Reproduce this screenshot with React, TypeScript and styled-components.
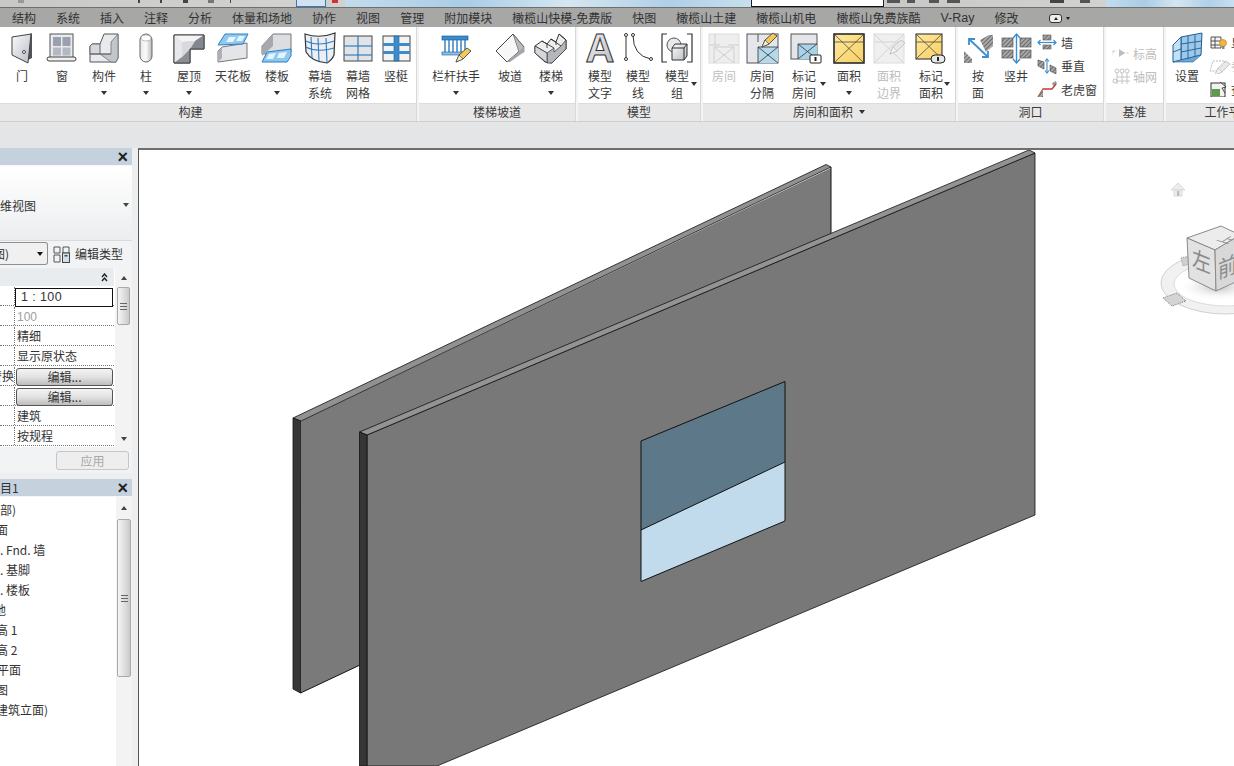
import React from "react";
import styled, { createGlobalStyle } from "styled-components";

const Global = createGlobalStyle`
  html, body { margin: 0; padding: 0; height: 100%; overflow: hidden; background: #fff; }
  #root { width: 1234px; height: 766px; overflow: hidden; }
  * { box-sizing: border-box; }
  body { font-family: "Noto Sans CJK SC", "Liberation Sans", sans-serif; font-size: 12px; color: #2e2e2e; }
`;

const Page = styled.div`width: 1234px; height: 766px; display: flex; flex-direction: column; overflow: hidden;`;

/* ---------- title strip ---------- */
const TitleStrip = styled.div`
  height: 8px; flex: none; display: flex; border-bottom: 1px solid #6f6f6f;
  background: #cfcfcd;
`;
const TitleSeg = styled.div<{ $w: number; $kind: "grey" | "blue" | "white" }>`
  width: ${(p) => p.$w}px; flex: none; position: relative;
  background: ${(p) =>
    p.$kind === "blue"
      ? "linear-gradient(90deg,#c3dcec,#a9cde6 30%,#d5e6f0 55%,#afd0e7 80%,#c7dfee)"
      : p.$kind === "white"
      ? "#fff"
      : "linear-gradient(90deg,#c8c8c6,#d2d2d0)"};
  ${(p) => (p.$kind === "white" ? "border-bottom:1px solid #111;border-left:1px solid #222;border-right:1px solid #222;" : "")}
`;
const ActiveQuick = styled.div`
  position: absolute; left: 0; top: 0; width: 30px; height: 7px; background: #cfe3f4;
  border: 1px solid #3d79b0; border-top: 0;
`;
const QuickMark = styled.div<{ $x: number; $c?: string; $w?: number }>`
  position: absolute; left: ${(p) => p.$x}px; top: 0; width: ${(p) => p.$w ?? 3}px; height: 3px;
  background: ${(p) => p.$c ?? "#444"};
`;

/* ---------- tabs ---------- */
const TabBar = styled.div`
  height: 19px; flex: none; display: flex; align-items: center; gap: 20px; padding: 1px 0 0 12px;
  background: #a7a7a6; white-space: nowrap;
`;
const Tab = styled.span`font-size: 12px; line-height: 18px; color: #333;`;
const Latin = styled.span`font-family: "Liberation Sans", sans-serif; font-size: 12.5px; color: #333;`;
const Minimize = styled.span`
  display: inline-flex; align-items: center; gap: 4px; margin-left: 11px;
`;
const MinimizeBox = styled.span`
  width: 13px; height: 9px; border: 1px solid #333; border-radius: 3px; background: #eee;
  display: flex; align-items: center; justify-content: center;
  &::before { content: ""; border: 2px solid transparent; border-bottom: 3px solid #222; border-top: 0; }
`;
const MiniCaret = styled.span`border: 2.5px solid transparent; border-top: 3px solid #222; border-bottom: 0;`;

/* ---------- ribbon ---------- */
const Ribbon = styled.div`
  height: 95px; flex: none; display: flex; gap: 2px; background: #f4f4f4; overflow: hidden;
  border-bottom: 1px solid #cfcfcf;
`;
const Panel = styled.section<{ $w: number }>`
  width: ${(p) => p.$w}px; flex: none; display: flex; flex-direction: column; background: #fff;
  border-right: 1px solid #d8d8d8;
`;
const PanelBody = styled.div<{ $pl?: number }>`
  height: 76px; flex: none; display: flex; padding: 5px 0 0 ${(p) => p.$pl ?? 0}px; overflow: hidden;
`;
const PanelTitle = styled.div<{ $pr?: number }>`
  height: 18px; flex: none; display: flex; align-items: center; justify-content: center; gap: 6px;
  padding: 0 ${(p) => p.$pr ?? 0}px 2px 0;
  background: #e8e8e8; color: #3a3a3a; font-size: 12px; line-height: 16px; border-top: 1px solid #dcdcdc;
`;
const TitleCaret = styled.span`border: 3.5px solid transparent; border-top: 4px solid #333; border-bottom: 0;`;
const ToolBox = styled.div<{ $w: number }>`
  width: ${(p) => p.$w}px; flex: none; position: relative; display: flex; flex-direction: column; align-items: center;
`;
const IconBox = styled.div`height: 32px; width: 36px; flex: none;`;
const Label = styled.div<{ $off?: boolean }>`
  margin-top: 3px; text-align: center; font-size: 12px; line-height: 17px; white-space: pre-line;
  color: ${(p) => (p.$off ? "#bdbdbd" : "#3a3a3a")};
`;
const Caret = styled.div`
  width: 0; height: 0; margin: 7px auto 0; border: 3px solid transparent; border-top: 4px solid #333; border-bottom: 0;
`;
const SideCaret = styled.span`
  position: absolute; right: 3px; top: 50px; width: 0; height: 0;
  border: 3px solid transparent; border-top: 4px solid #333; border-bottom: 0;
`;
const Stack = styled.div<{ $w: number; $gap?: number; $top?: number; $pl?: number }>`
  width: ${(p) => p.$w}px; flex: none; display: flex; flex-direction: column; gap: ${(p) => p.$gap ?? 7.5}px;
  padding-top: ${(p) => p.$top ?? 2}px; padding-left: ${(p) => p.$pl ?? 2}px; overflow: hidden;
`;
const StackRow = styled.div<{ $off?: boolean; $gx?: number }>`
  display: flex; align-items: center; gap: ${(p) => p.$gx ?? 3}px; height: 16px; white-space: nowrap; font-size: 12px;
  color: ${(p) => (p.$off ? "#bdbdbd" : "#3a3a3a")};
`;

const GapBar = styled.div`height: 26px; flex: none; background: #e3e5e6;`;

/* ---------- main ---------- */
const Main = styled.div`flex: 1; min-height: 0; display: flex;`;
const Dock = styled.aside`
  width: 138px; flex: none; background: #eceeef; display: flex; flex-direction: column; gap: 6px; padding-right: 6px;
`;
const PalHead = styled.div`
  height: 18px; flex: none; background: #c5d2de; display: flex; align-items: center; justify-content: space-between;
  font-size: 12px; color: #333; border-bottom: 1px solid #f4f6f7;
`;
const Close = styled.span`font: bold 18px/16px "Liberation Sans", sans-serif; color: #222; margin-right: 4px;`;
const Props = styled.div`display: flex; flex-direction: column; flex: none; background: #f1f3f4;`;
const TypeSelect = styled.div`
  height: 75px; flex: none; background: linear-gradient(180deg,#fff,#f4f5f6 60%,#ecedee); display: flex; align-items: center;
  justify-content: space-between; padding: 4px 3px 0 0; font-size: 12px; color: #333; border-bottom: 1px solid #d9dadb;
`;
const SmallCaret = styled.span`width: 0; height: 0; border: 3.5px solid transparent; border-top: 4px solid #444; border-bottom: 0;`;
const FilterRow = styled.div`height: 27px; flex: none; display: flex; align-items: center; gap: 5px; padding-bottom: 2px;`;
const Combo = styled.div`
  width: 48px; height: 23px; flex: none; display: flex; align-items: center; justify-content: space-between; overflow: hidden;
  background: #f0f0f0; border: 1px solid #8f8f8f; border-left: 0; border-radius: 0 3px 3px 0; padding-right: 4px; font-size: 12px;
`;
const ComboText = styled.span`margin-left: -7px;`;
const BlackCaret = styled(SmallCaret)`border-top-color: #111;`;
const EditType = styled.div`display: flex; align-items: center; gap: 5px; white-space: nowrap; color: #333;`;
const GridWrap = styled.div`display: flex; height: 179px; flex: none; background: #fff;`;
const Grid = styled.div`width: 114px; flex: none; display: flex; flex-direction: column;`;
const GroupHead = styled.div`
  height: 18px; flex: none; background: #e8ecef; display: flex; align-items: center; justify-content: flex-end; padding-right: 6px;
`;
const Row = styled.div`height: 20px; flex: none; display: flex; border-bottom: 1px dotted #777; background: #fff; padding-top: 1px;`;
const KeyCell = styled.div`
  width: 15px; flex: none; overflow: hidden; display: flex; justify-content: flex-end; white-space: nowrap;
  border-right: 1px dotted #777; line-height: 18px; font-size: 12px; color: #333;
`;
const ValCell = styled.div<{ $muted?: boolean }>`
  flex: 1; min-width: 0; padding-left: 2px; line-height: 18px; font-size: 12px; color: ${(p) => (p.$muted ? "#a0a0a0" : "#333")};
`;
const NumVal = styled(ValCell)`font-family: "Liberation Sans", sans-serif; padding-top: 1px;`;
const ActiveCell = styled.div`
  flex: 1; min-width: 0; border: 1px solid #111; background: #fff; height: 19px; margin: 1px 1px -1px 0; padding-left: 5px;
  position: relative; z-index: 1;
  font: 12.5px/17px "Liberation Sans", sans-serif; letter-spacing: .4px; color: #333;
`;
const EditBtn = styled.div`
  flex: 1; margin: 1px 1px -1px 1px; height: 18px; border: 1px solid #555; border-radius: 3px; font-size: 12px; line-height: 16px; text-align: center; color: #333;
  position: relative; z-index: 1;
  background: linear-gradient(180deg,#f4f4f4,#e2e2e2 50%,#bdbdbd);
`;
const ScrollTrack = styled.div<{ $w: number }>`
  width: ${(p) => p.$w}px; flex: none; background: #f3f3f3; display: flex; flex-direction: column; align-items: center; margin-left: 1px; position: relative;
`;
const ScrollArrow = styled.span<{ $up?: boolean; $gap?: number }>`
  width: 0; height: 0; flex: none; margin: ${(p) => p.$gap ?? 6}px 0; border: 3.5px solid transparent;
  ${(p) => (p.$up ? "border-bottom: 4px solid #444; border-top: 0;" : "border-top: 4px solid #444; border-bottom: 0;")}
`;
const Thumb = styled.div<{ $h: number; $w: number }>`
  height: ${(p) => p.$h}px; width: ${(p) => p.$w}px; flex: none; border: 1px solid #a9a9a9; border-radius: 2px;
  background: linear-gradient(90deg,#f5f5f5,#dcdcdc 60%,#c9c9c9); display: flex; align-items: center; justify-content: center;
`;
const Grip = styled.span`width: 7px; height: 7px; border-top: 1px solid #666; border-bottom: 1px solid #666; position: relative;
  &::before { content: ""; position: absolute; left: 0; right: 0; top: 2px; border-top: 1px solid #666; }`;
const TrackFill = styled.div`flex: 1;`;
const ApplyRow = styled.div`height: 26px; flex: none; display: flex; justify-content: flex-end; align-items: center; padding-right: 3px; background: #f2f3f4;`;
const ApplyBtn = styled.div`
  width: 73px; height: 19px; border: 1px solid #c6c6c6; border-radius: 3px; background: #eeeeee; color: #a8a8a8; text-align: center; font-size: 12px; line-height: 17px;
`;
const Browser = styled.div`flex: 1; min-height: 0; display: flex; flex-direction: column;`;
const BrowserBody = styled.div`flex: 1; min-height: 0; display: flex; background: #fff;`;
const Tree = styled.div`flex: 1; min-width: 0; padding-top: 3px; overflow: hidden;`;
const TreeRow = styled.div<{ $cut?: number }>`
  height: 20px; line-height: 20px; font-size: 12px; white-space: nowrap; color: #333; margin-left: ${(p) => -(p.$cut ?? 0)}px;
`;

const Canvas = styled.main`
  flex: 1; min-width: 0; background: #fff; border-top: 2px solid #6e6e6e; border-left: 1px solid #555; overflow: hidden; line-height: 0;
`;

/* ---------- icons ---------- */
const Defs = () => (
  <svg width="0" height="0" style={{ display: "block" }}>
    <defs>
      <linearGradient id="gs" x1="0" y1="0" x2="1" y2="1">
        <stop offset="0" stopColor="#fbfbfb" />
        <stop offset="1" stopColor="#b9bcc4" />
      </linearGradient>
      <linearGradient id="gh" x1="0" y1="0" x2="1" y2="0">
        <stop offset="0" stopColor="#e6e7ea" />
        <stop offset=".5" stopColor="#fbfbfb" />
        <stop offset="1" stopColor="#b4b6bb" />
      </linearGradient>
      <linearGradient id="gy" x1="0" y1="0" x2="1" y2="1">
        <stop offset="0" stopColor="#ffe9a0" />
        <stop offset="1" stopColor="#f7cf63" />
      </linearGradient>
      <linearGradient id="ga" x1="0" y1="0" x2="1" y2="1">
        <stop offset="0" stopColor="#f6f6f8" />
        <stop offset="1" stopColor="#b4b6bb" />
      </linearGradient>
      <pattern id="hatch" width="3" height="3" patternUnits="userSpaceOnUse" patternTransform="rotate(45)">
        <rect width="3" height="3" fill="#a8a8a8" />
        <line x1="0" y1="0" x2="0" y2="3" stroke="#3d3d3d" strokeWidth="1.2" />
      </pattern>
    </defs>
  </svg>
);

const I: React.FC<{ children: React.ReactNode; w?: number; h?: number; vb?: string }> = ({ children, w = 36, h = 32, vb }) => (
  <svg width={w} height={h} viewBox={vb ?? `0 0 ${w} ${h}`} style={{ display: "block", flex: "none" }}>
    {children}
  </svg>
);

const Tag = ({ x, y }: { x: number; y: number }) => (
  <g>
    <rect x={x} y={y} width="11" height="8" rx="1" fill="#fff" stroke="#222" />
    <rect x={x + 4.5} y={y + 2} width="2" height="4" fill="#222" />
  </g>
);
const RoundTag = ({ x, y }: { x: number; y: number }) => (
  <g>
    <rect x={x} y={y} width="14" height="8" rx="4" fill="#e8e8e8" stroke="#222" />
    <rect x={x + 6} y={y + 2} width="2" height="4" fill="#222" />
  </g>
);
const Pencil = ({ x, y, off }: { x: number; y: number; off?: boolean }) => (
  <g transform={`translate(${x} ${y})`}>
    <polygon points="0,14 3,7 11,0 15,3 7,11" fill={off ? "#e8e8e8" : "#f4c85c"} stroke={off ? "#bbb" : "#333"} strokeWidth=".8" />
    <polygon points="0,14 3,7 7,11" fill={off ? "#f4f4f4" : "#fbeecf"} stroke={off ? "#bbb" : "#333"} strokeWidth=".6" />
  </g>
);

const icons: Record<string, React.ReactNode> = {
  door: (
    <I>
      <polygon points="24,3 28,1 28,26 24,28" fill="#50535b" />
      <polygon points="8,5 27,2 24,31 8,23" fill="url(#gs)" stroke="#444" strokeWidth="1" />
      <circle cx="20" cy="20" r="1.5" fill="#fff" stroke="#444" />
    </I>
  ),
  window: (
    <I>
      <rect x="6" y="2" width="23" height="24" fill="#e9eaee" stroke="#555" />
      <rect x="9" y="5" width="8" height="9" fill="#9aa0ad" />
      <rect x="18.5" y="5" width="8" height="9" fill="#9aa0ad" />
      <rect x="9" y="15.5" width="8" height="8" fill="#b4b8c2" />
      <rect x="18.5" y="15.5" width="8" height="8" fill="#b4b8c2" />
      <rect x="3" y="25" width="29" height="4" rx="2" fill="#f0f0f0" stroke="#444" />
    </I>
  ),
  comp: (
    <I>
      <polygon points="4,14 4,30 30,30 32,26 32,2 18,2 14,12 6,12" fill="#e8eaee" stroke="#555" />
      <polygon points="6,12 14,12 14,22 4,22 4,14" fill="#d6d8de" stroke="#666" />
      <polygon points="14,22 25,22 25,10 32,2 32,26 30,30 25,30" fill="#c2c5cc" stroke="#666" strokeWidth=".7" />
      <polyline points="4,22 25,22" stroke="#666" fill="none" />
    </I>
  ),
  column: (
    <I>
      <rect x="12" y="2" width="12" height="28" rx="6" fill="url(#gh)" stroke="#666" />
      <ellipse cx="18" cy="6" rx="5" ry="3" fill="#fff" stroke="#999" strokeWidth=".6" />
    </I>
  ),
  roof: (
    <I>
      <polygon points="3,3 33,3 33,17 19,17 19,31 3,31" fill="#c9cacd" stroke="#444" />
      <polygon points="3,3 33,3 24,9 11,10" fill="#f4f4f6" />
      <polygon points="3,3 11,10 11,25 3,31" fill="#e8e8ea" />
      <polygon points="11,25 19,17 19,31 3,31" fill="#8d8e94" />
      <polygon points="33,3 33,17 19,17 24,9" fill="#85878e" />
      <polygon points="11,10 24,9 19,17 11,25" fill="#d8d9dc" />
      <polyline points="3,3 33,3 33,17 19,17 19,31 3,31 3,3" fill="none" stroke="#444" />
    </I>
  ),
  ceiling: (
    <I>
      <polygon points="7,15 32,11 32,26 3,30 3,19" fill="#e4e5e9" stroke="#777" />
      <polygon points="3,19 7,15 7,26 3,30" fill="#aeb0b6" />
      <polygon points="10,2 33,2 28,12 3,13" fill="#8fc9f0" stroke="#2f7fc2" />
      <polygon points="14,5 21,5 18,10 11,10" fill="#e6f4fc" />
      <polygon points="24,4 30,4 27,9 21,9" fill="#e6f4fc" />
    </I>
  ),
  floor: (
    <I>
      <polygon points="3,14 14,2 32,2 32,20 3,22" fill="#dcdde1" stroke="#777" />
      <polygon points="3,14 14,2 14,14 3,24" fill="#a6a8ae" />
      <polygon points="8,20 32,17 32,24 28,30 3,30" fill="#8fc9f0" stroke="#2f7fc2" />
      <polygon points="10,22 17,21 14,27 7,27" fill="#e6f4fc" />
      <polygon points="20,21 28,20 25,26 18,26" fill="#e6f4fc" />
    </I>
  ),
  cwall: (
    <I>
      <path d="M3 2 Q18 7 33 1 L32 23 Q30 28 25 31 Q10 30 4 20 Z" fill="#eceef2" stroke="#333" strokeWidth="1.2" />
      <g fill="none" stroke="#2f7cc0" strokeWidth="1.1">
        <path d="M3.5 9 Q16 15 32.5 9" />
        <path d="M3.5 15 Q16 21 32 16" />
        <path d="M9 5 L10 26" />
        <path d="M16 6 L17 29" />
        <path d="M24 6 L25 31" />
      </g>
    </I>
  ),
  grid: (
    <I>
      <rect x="4" y="4" width="28" height="25" fill="#e2e3e7" stroke="#444" />
      <g stroke="#2f7cc0" strokeWidth="1.2">
        <line x1="18" y1="4" x2="18" y2="29" />
        <line x1="4" y1="14" x2="32" y2="14" />
        <line x1="4" y1="23" x2="32" y2="23" />
      </g>
    </I>
  ),
  mullion: (
    <I>
      <rect x="5" y="4" width="27" height="25" fill="#f3f3f3" stroke="#444" />
      <rect x="16" y="4" width="5" height="25" fill="#3d8bcb" stroke="#1f5f96" strokeWidth=".6" />
      <rect x="5" y="11" width="27" height="3" fill="#3d8bcb" />
      <rect x="5" y="19" width="27" height="3" fill="#3d8bcb" />
    </I>
  ),
  rail: (
    <I>
      <rect x="4" y="4" width="26" height="4" fill="#3d8bcb" stroke="#1f5f96" strokeWidth=".7" />
      <g stroke="#2f7cc0" strokeWidth="1.4">
        <line x1="7" y1="8" x2="7" y2="21" />
        <line x1="11" y1="8" x2="11" y2="21" />
        <line x1="15" y1="8" x2="15" y2="21" />
        <line x1="19" y1="8" x2="19" y2="21" />
        <line x1="23" y1="8" x2="23" y2="21" />
        <line x1="27" y1="8" x2="27" y2="18" />
      </g>
      <rect x="4" y="20" width="22" height="3" fill="#8bbfe4" stroke="#1f5f96" strokeWidth=".6" />
      <Pencil x={18} y={16} />
    </I>
  ),
  ramp: (
    <I>
      <polygon points="4,19 21,2 32,15 15,30" fill="#f7f7f7" stroke="#444" />
      <polygon points="21,2 32,15 32,20 27,20" fill="#b9bbc0" stroke="#555" strokeWidth=".6" />
      <polygon points="15,30 32,15 32,20 18,30" fill="#a3a5ab" />
    </I>
  ),
  stairs: (
    <I>
      <polygon points="2,14 9,9 14,12 18,7 23,10 26,2 33,8 33,17 19,31 12,30 2,21" fill="#eeeef0" stroke="#333" />
      <path d="M2 14 L14 21 M9 9 L21 16 M14 12 L14 16 M18 7 L28 14 M23 10 L23 13 M26 2 L33 8" stroke="#333" fill="none" strokeWidth=".9" />
      <polygon points="14,21 21,16 21,20 28,14 33,8 33,17 19,31 14,31" fill="#b4b6bb" stroke="#333" strokeWidth=".7" />
      <polygon points="2,14 14,21 14,31 2,21" fill="#d4d6da" stroke="#333" strokeWidth=".7" />
    </I>
  ),
  modelText: (
    <I>
      <text x="18" y="30" textAnchor="middle" fontFamily="Liberation Sans, sans-serif" fontWeight="700" fontSize="40" fill="url(#ga)" stroke="#333" strokeWidth="1">A</text>
    </I>
  ),
  modelLine: (
    <I>
      <g fill="none" stroke="#333" strokeWidth="1">
        <line x1="6" y1="3" x2="6" y2="27" />
        <path d="M13 3 Q13 24 31 27" />
      </g>
      <g fill="#fff" stroke="#333">
        <circle cx="6" cy="3" r="1.5" /><circle cx="6" cy="27" r="1.5" /><circle cx="13" cy="3" r="1.5" /><circle cx="31" cy="27" r="1.5" />
      </g>
    </I>
  ),
  modelGroup: (
    <I>
      <path d="M8 2 H3 V30 H8 M28 2 H33 V30 H28" fill="none" stroke="#333" strokeWidth="1.2" />
      <circle cx="15" cy="13" r="7" fill="#e8e9ec" stroke="#555" />
      <polygon points="13,16 16,12 28,12 28,24 25,28 13,28" fill="url(#gs)" stroke="#333" />
      <path d="M13 16 H25 V28 M25 16 L28 12" fill="none" stroke="#333" />
    </I>
  ),
  roomOff: (
    <I>
      <rect x="3" y="2" width="30" height="29" fill="#eeeeee" stroke="#dcdcdc" />
      <path d="M9 2 V13 M3 13 H14 M33 13 H22 M8 15 H28 V31 M8 15 V31 M8 15 L28 31 M28 15 L8 31" fill="none" stroke="#cfcfcf" />
    </I>
  ),
  roomSep: (
    <I>
      <rect x="3" y="2" width="31" height="29" fill="#e5e6ea" stroke="#555" />
      <rect x="14" y="15" width="20" height="16" fill="#b5d8ea" />
      <path d="M14 15 V31 M14 15 H34 M14 31 L34 15 M34 31 L14 15" fill="none" stroke="#333" strokeWidth=".8" />
      <path d="M14 2 V10" stroke="#555" />
      <Pencil x={18} y={1} />
    </I>
  ),
  roomTag: (
    <I>
      <rect x="5" y="2" width="26" height="25" fill="#e5e6ea" stroke="#555" />
      <rect x="12" y="12" width="19" height="15" fill="#a8d3e8" />
      <path d="M12 12 H31 M12 12 V27 M12 27 L31 12 M31 27 L12 12" fill="none" stroke="#333" strokeWidth=".8" />
      <Tag x={24} y={23} />
    </I>
  ),
  area: (
    <I>
      <rect x="3" y="2" width="30" height="29" fill="url(#gy)" stroke="#333" strokeWidth="1.2" />
      <path d="M3 2 L33 31 M33 2 L3 31 M3 10 H33" fill="none" stroke="#4f4a33" strokeWidth=".8" />
      <rect x="3" y="2" width="30" height="29" fill="none" stroke="#333" strokeWidth="1.2" />
    </I>
  ),
  areaOff: (
    <I>
      <rect x="3" y="2" width="30" height="29" fill="#efefef" stroke="#dcdcdc" />
      <path d="M3 2 L33 31 M33 2 L3 31 M3 10 H33" fill="none" stroke="#d4d4d4" />
      <Pencil x={19} y={8} off />
    </I>
  ),
  areaTag: (
    <I>
      <rect x="3" y="2" width="26" height="25" fill="url(#gy)" stroke="#333" strokeWidth="1.1" />
      <path d="M3 2 L29 27 M29 2 L3 27 M3 10 H29" fill="none" stroke="#4f4a33" strokeWidth=".8" />
      <RoundTag x={18} y={23} />
    </I>
  ),
  byFace: (
    <I>
      <polygon points="4,19 12,27 12,31 4,31" fill="url(#hatch)" />
      <polygon points="20,8 29,3 33,3 33,14 26,20" fill="url(#hatch)" />
      <g stroke="#3b8fd0" strokeWidth="1.8" fill="none">
        <line x1="9" y1="7" x2="28" y2="25" />
        <polyline points="9,13 9,7 15,7" />
        <polyline points="22,25 28,25 28,19" />
      </g>
    </I>
  ),
  shaft: (
    <I>
      <rect x="4" y="6" width="11" height="9" fill="url(#hatch)" stroke="#555" strokeWidth=".7" />
      <rect x="22" y="6" width="11" height="9" fill="url(#hatch)" stroke="#555" strokeWidth=".7" />
      <rect x="4" y="18" width="11" height="8" fill="url(#hatch)" stroke="#555" strokeWidth=".7" />
      <rect x="22" y="18" width="11" height="8" fill="url(#hatch)" stroke="#555" strokeWidth=".7" />
      <g stroke="#3b8fd0" strokeWidth="1.4" fill="none">
        <line x1="18.5" y1="2" x2="18.5" y2="31" />
        <polyline points="15,6 18.5,2 22,6" />
        <polyline points="15,27 18.5,31 22,27" />
      </g>
    </I>
  ),
  setup: (
    <I>
      <polygon points="12,5 33,1 32,23 12,28" fill="#9cc9ea" stroke="#1f5f96" />
      <polygon points="4,13 12,5 12,28 4,30" fill="#c4e0f4" stroke="#1f5f96" />
      <polygon points="4,30 12,28 32,23 24,30" fill="#6aa8d8" stroke="#1f5f96" strokeWidth=".6" />
      <path d="M19 4 V27 M26 3 V25 M12 12 L33 9 M12 20 L32 16 M4 20 L12 17" stroke="#1f5f96" fill="none" strokeWidth=".9" />
    </I>
  ),
};

const SmallIcons = {
  wall: (
    <I w={22} h={16}>
      <rect x="7" y="1" width="8" height="5" fill="url(#hatch)" stroke="#555" strokeWidth=".6" />
      <rect x="7" y="11" width="8" height="4" fill="url(#hatch)" stroke="#555" strokeWidth=".6" />
      <g stroke="#3b8fd0" strokeWidth="1.2" fill="none">
        <line x1="2" y1="8.5" x2="20" y2="8.5" />
        <polyline points="4.5,6 2,8.5 4.5,11" /><polyline points="17.5,6 20,8.5 17.5,11" />
      </g>
    </I>
  ),
  vert: (
    <I w={22} h={16}>
      <polygon points="2,2 8,4 8,11 2,8" fill="url(#hatch)" stroke="#444" strokeWidth=".6" />
      <polygon points="14,7 20,10 20,16 14,13" fill="url(#hatch)" stroke="#444" strokeWidth=".6" />
      <g stroke="#3b8fd0" strokeWidth="1.1" fill="none">
        <line x1="11" y1="1" x2="11" y2="15" /><polyline points="9,3.5 11,1 13,3.5" /><polyline points="9,12.5 11,15 13,12.5" />
      </g>
    </I>
  ),
  dormer: (
    <I w={22} h={16}>
      <polygon points="16,2 20,0 21,3 17,5" fill="#9a9a9a" />
      <polyline points="2,16 7,8 16,8 20,3" fill="none" stroke="#c23b2a" strokeWidth="1.3" />
      <polygon points="2,16 7,8 7,16" fill="url(#hatch)" />
    </I>
  ),
  level: (
    <I w={22} h={14}>
      <path d="M5 5 H9 M5 5 V9 M15 7 H22" stroke="#c4c4c4" strokeDasharray="2 1.5" fill="none" />
      <polygon points="11,3 17,7 11,11" fill="#bdbdbd" />
    </I>
  ),
  axis: (
    <I w={22} h={18}>
      <g fill="none" stroke="#c4c4c4">
        <circle cx="9" cy="4" r="2" /><circle cx="14" cy="4" r="2" /><circle cx="19" cy="4" r="2" />
        <circle cx="7" cy="14" r="2" /><path d="M9 6 V17 M14 6 V17 M19 6 V17 M9 10 H22 M9 14 H22" />
      </g>
    </I>
  ),
  plane: (
    <I w={22} h={16}>
      <path d="M3 3 H13 V14 H3 Z M3 7 H13 M3 11 H13 M7 3 V14" fill="#f5f5f5" stroke="#444" strokeWidth=".9" />
      <circle cx="15" cy="9" r="3.5" fill="#f5b63f" stroke="#b77f19" strokeWidth=".6" />
      <rect x="14" y="12" width="2.5" height="3" fill="#888" />
    </I>
  ),
  draw: (
    <I w={22} h={16}>
      <polygon points="5,3 17,3 14,13 2,13" fill="none" stroke="#bbb" strokeDasharray="2 1" />
      <Pencil x={7} y={3} off />
    </I>
  ),
  viewer: (
    <I w={22} h={16}>
      <rect x="3" y="2" width="14" height="14" fill="#f2f2f2" stroke="#333" />
      <rect x="4" y="8" width="8" height="7" fill="#5d9a4b" />
      <polyline points="12,1 18,6 14,7 17,12" fill="#fff" stroke="#222" strokeWidth=".8" />
    </I>
  ),
};

type ToolProps = { w: number; icon: string; label: string; caret?: boolean; side?: boolean; off?: boolean };
const Tool: React.FC<ToolProps> = ({ w, icon, label, caret, side, off }) => (
  <ToolBox $w={w}>
    <IconBox>{icons[icon]}</IconBox>
    <Label $off={off}>{label}</Label>
    {caret && <Caret />}
    {side && <SideCaret />}
  </ToolBox>
);

const build: ToolProps[] = [
  { w: 40, icon: "door", label: "门" },
  { w: 40, icon: "window", label: "窗" },
  { w: 44, icon: "comp", label: "构件", caret: true },
  { w: 40, icon: "column", label: "柱", caret: true },
  { w: 46, icon: "roof", label: "屋顶", caret: true },
  { w: 42, icon: "ceiling", label: "天花板" },
  { w: 46, icon: "floor", label: "楼板", caret: true },
  { w: 40, icon: "cwall", label: "幕墙\n系统" },
  { w: 36, icon: "grid", label: "幕墙\n网格" },
  { w: 40, icon: "mullion", label: "竖梃" },
];
const stairs: ToolProps[] = [
  { w: 74, icon: "rail", label: "栏杆扶手", caret: true },
  { w: 34, icon: "ramp", label: "坡道" },
  { w: 48, icon: "stairs", label: "楼梯", caret: true },
];
const model: ToolProps[] = [
  { w: 44, icon: "modelText", label: "模型\n文字" },
  { w: 32, icon: "modelLine", label: "模型\n线" },
  { w: 46, icon: "modelGroup", label: "模型\n组", side: true },
];
const rooms: ToolProps[] = [
  { w: 42, icon: "roomOff", label: "房间", off: true },
  { w: 34, icon: "roomSep", label: "房间\n分隔" },
  { w: 50, icon: "roomTag", label: "标记\n房间", side: true },
  { w: 40, icon: "area", label: "面积", caret: true },
  { w: 40, icon: "areaOff", label: "面积\n边界", off: true },
  { w: 44, icon: "areaTag", label: "标记\n面积", side: true },
];

const propRows: { key?: string; val?: string; kind?: "active" | "muted" | "btn" }[] = [
  { val: "1 : 100", kind: "active" },
  { val: "100", kind: "muted" },
  { val: "精细" },
  { val: "显示原状态" },
  { key: "替换", val: "编辑...", kind: "btn" },
  { val: "编辑...", kind: "btn" },
  { val: "建筑" },
  { val: "按规程" },
];

const treeRows: { t: string; cut?: number }[] = [
  { t: "部)" },
  { t: "面", cut: 4 },
  { t: ". Fnd. 墙" },
  { t: ". 基脚" },
  { t: ". 楼板" },
  { t: "地", cut: 6 },
  { t: "高 1", cut: 4 },
  { t: "高 2", cut: 4 },
  { t: "平面", cut: 3 },
  { t: "图", cut: 4 },
  { t: "建筑立面)", cut: 4 },
];

const Scene = () => (
  <svg width="1095" height="616" viewBox="139 150 1095 616" style={{ display: "block" }}>
    <defs>
      <radialGradient id="shadow">
        <stop offset="0" stopColor="#888" stopOpacity=".55" />
        <stop offset="1" stopColor="#fff" stopOpacity="0" />
      </radialGradient>
    </defs>
    {/* back wall */}
    <polygon points="301,421 831,168 831,400 360,665 300.5,693" fill="#7a7a7a" />
    <polygon points="293,418 826,164.5 831,167 301,421" fill="#919191" stroke="#111" strokeWidth=".8" />
    <polygon points="293,418 300.5,421 300.5,693 293,689" fill="#363636" stroke="#111" strokeWidth=".8" />
    <polyline points="831,167 831,240" fill="none" stroke="#111" />
    <polyline points="300.5,693 360,665" fill="none" stroke="#111" />
    {/* front wall */}
    <polygon points="367,435 1035,153 1035,515 437,766 367,766" fill="#787878" stroke="#111" strokeWidth=".8" />
    <polygon points="359.5,432 1029,150 1035,153 367,435" fill="#939393" stroke="#111" strokeWidth=".8" />
    <polygon points="359.5,432 367,435 367,766 359.5,766" fill="#363636" stroke="#111" strokeWidth=".8" />
    {/* window */}
    <polygon points="641,441 785,381.5 785,462 641,530" fill="#5d7889" />
    <polygon points="641,530 785,462 785,521 641,581.5" fill="#c1dbec" />
    <line x1="641" y1="530" x2="785" y2="462" stroke="#111" />
    <polygon points="641,441 785,381.5 785,521 641,581.5" fill="none" stroke="#111" />
    {/* home */}
    <g fill="#ebedee" stroke="#d2d4d6" strokeWidth=".8">
      <polygon points="1171,190 1178,183 1185,190" />
      <rect x="1174" y="190" width="8" height="6" />
    </g>
    <rect x="1177" y="191" width="2.4" height="5" fill="#bcbec0" />
    {/* view cube */}
    <ellipse cx="1226" cy="283" rx="65" ry="31" fill="#f1f1f1" stroke="#d0d0d0" />
    <ellipse cx="1226" cy="284" rx="52" ry="22" fill="#fff" stroke="#dcdcdc" />
    <ellipse cx="1218" cy="287" rx="40" ry="14" fill="url(#shadow)" />
    <polygon points="1163,298 1177,293 1186,301 1172,306" fill="#d4d4d4" stroke="#777" strokeDasharray="1 1" />
    <polygon points="1181,258 1189,256 1189,264 1183,266" fill="#d0d0d0" stroke="#999" strokeDasharray="1 1" />
    <polygon points="1187,238 1221,226 1240,235 1215,250" fill="#ececec" stroke="#8a8a8a" />
    <polygon points="1187,238 1215,250 1216,291 1189,278" fill="#e2e2e2" stroke="#8a8a8a" />
    <polygon points="1215,250 1240,235 1240,280 1216,291" fill="#d8d8d8" stroke="#8a8a8a" />
    <text x="0" y="0" transform="matrix(1 .4 0 1.2 1192 266)" fontFamily="Noto Sans CJK SC, sans-serif" fontSize="19" fill="#8b8b8b">左</text>
    <text x="0" y="0" transform="matrix(1 -.4 0 1.2 1218 279)" fontFamily="Noto Sans CJK SC, sans-serif" fontSize="19" fill="#8b8b8b">前</text>
    <text x="0" y="0" transform="matrix(1 .3 -.8 .5 1216 240)" fontFamily="Noto Sans CJK SC, sans-serif" fontSize="13" fill="#8b8b8b">上</text>
  </svg>
);

export default function App() {
  return (
    <Page>
      <Global />
      <Defs />
      <TitleStrip>
        <TitleSeg $w={296} $kind="grey">
          <QuickMark $x={18} $c="#999" $w={6} />
          <QuickMark $x={138} $w={2} />
          <QuickMark $x={160} $w={2} />
          <QuickMark $x={183} $w={5} />
          <QuickMark $x={208} $c="#777" $w={6} />
          <QuickMark $x={230} $w={1} />
        </TitleSeg>
        <TitleSeg $w={49} $kind="grey">
          <ActiveQuick />
          <QuickMark $x={36} $c="#c33" $w={6} />
        </TitleSeg>
        <TitleSeg $w={406} $kind="blue" />
        <TitleSeg $w={133} $kind="white" />
        <TitleSeg $w={222} $kind="grey">
          <QuickMark $x={3} $w={13} $c="#555" />
          <QuickMark $x={23} $w={8} $c="#555" />
          <QuickMark $x={45} $w={10} $c="#555" />
          <QuickMark $x={63} $w={13} $c="#555" />
          <QuickMark $x={166} $w={14} />
          <QuickMark $x={196} $w={10} $c="#555" />
        </TitleSeg>
        <TitleSeg $w={128} $kind="blue" />
      </TitleStrip>
      <TabBar>
        <Tab>结构</Tab><Tab>系统</Tab><Tab>插入</Tab><Tab>注释</Tab><Tab>分析</Tab><Tab>体量和场地</Tab>
        <Tab>协作</Tab><Tab>视图</Tab><Tab>管理</Tab><Tab>附加模块</Tab><Tab>橄榄山快模-免费版</Tab><Tab>快图</Tab>
        <Tab>橄榄山土建</Tab><Tab>橄榄山机电</Tab><Tab>橄榄山免费族酷</Tab><Latin>V-Ray</Latin><Tab>修改</Tab>
        <Minimize><MinimizeBox /><MiniCaret /></Minimize>
      </TabBar>
      <Ribbon>
        <Panel $w={417}>
          <PanelBody $pl={2}>{build.map((t) => <Tool key={t.label} {...t} />)}</PanelBody>
          <PanelTitle $pr={35}>构建</PanelTitle>
        </Panel>
        <Panel $w={157}>
          <PanelBody>{stairs.map((t) => <Tool key={t.label} {...t} />)}</PanelBody>
          <PanelTitle>楼梯坡道</PanelTitle>
        </Panel>
        <Panel $w={123}>
          <PanelBody>{model.map((t) => <Tool key={t.label} {...t} />)}</PanelBody>
          <PanelTitle>模型</PanelTitle>
        </Panel>
        <Panel $w={253}>
          <PanelBody>{rooms.map((t) => <Tool key={t.label} {...t} />)}</PanelBody>
          <PanelTitle>房间和面积<TitleCaret /></PanelTitle>
        </Panel>
        <Panel $w={146}>
          <PanelBody>
            <Tool w={40} icon="byFace" label={"按\n面"} />
            <Tool w={36} icon="shaft" label="竖井" />
            <Stack $w={68}>
              <StackRow>{SmallIcons.wall}<span>墙</span></StackRow>
              <StackRow>{SmallIcons.vert}<span>垂直</span></StackRow>
              <StackRow>{SmallIcons.dormer}<span>老虎窗</span></StackRow>
            </Stack>
          </PanelBody>
          <PanelTitle>洞口</PanelTitle>
        </Panel>
        <Panel $w={58}>
          <PanelBody>
            <Stack $w={57} $gap={7} $top={13}>
              <StackRow $off>{SmallIcons.level}<span>标高</span></StackRow>
              <StackRow $off>{SmallIcons.axis}<span>轴网</span></StackRow>
            </Stack>
          </PanelBody>
          <PanelTitle>基准</PanelTitle>
        </Panel>
        <Panel $w={126}>
          <PanelBody>
            <Tool w={42} icon="setup" label="设置" />
            <Stack $w={84} $pl={0}>
              <StackRow $gx={1}>{SmallIcons.plane}<span>显示</span></StackRow>
              <StackRow $off $gx={1}>{SmallIcons.draw}<span>参照</span></StackRow>
              <StackRow $gx={1}>{SmallIcons.viewer}<span>查看</span></StackRow>
            </Stack>
          </PanelBody>
          <PanelTitle>工作平面</PanelTitle>
        </Panel>
      </Ribbon>
      <GapBar />
      <Main>
        <Dock>
          <Props>
            <PalHead><span /><Close>×</Close></PalHead>
            <TypeSelect><span>维视图</span><SmallCaret /></TypeSelect>
            <FilterRow>
              <Combo><ComboText>图)</ComboText><BlackCaret /></Combo>
              <EditType>
                <I w={17} h={18}>
                  <path d="M1 2 H7 V8 H1 Z M1 10 H7 V17 H1 Z M10 2 H16 V8 H10 Z" fill="none" stroke="#555" />
                  <rect x="9.5" y="8" width="7" height="9.5" fill="#cfe0ee" stroke="#444" />
                  <rect x="11.5" y="10" width="3" height="1.5" fill="#444" />
                </I>
                <span>编辑类型</span>
              </EditType>
            </FilterRow>
            <GridWrap>
              <Grid>
                <GroupHead>
                  <I w={7} h={9}>
                    <path d="M1 4 L3.5 1 L6 4 M1 8 L3.5 5 L6 8" fill="none" stroke="#222" strokeWidth="1.4" />
                  </I>
                </GroupHead>
                {propRows.map((r, i) => (
                  <Row key={i}>
                    <KeyCell>{r.key}</KeyCell>
                    {r.kind === "active" && <ActiveCell>{r.val}</ActiveCell>}
                    {r.kind === "muted" && <NumVal $muted>{r.val}</NumVal>}
                    {r.kind === "btn" && <EditBtn>{r.val}</EditBtn>}
                    {!r.kind && <ValCell>{r.val}</ValCell>}
                  </Row>
                ))}
              </Grid>
              <ScrollTrack $w={17}>
                <ScrollArrow $up $gap={7.5} />
                <Thumb $h={38} $w={13}><Grip /></Thumb>
                <TrackFill />
                <ScrollArrow />
              </ScrollTrack>
            </GridWrap>
            <ApplyRow><ApplyBtn>应用</ApplyBtn></ApplyRow>
          </Props>
          <Browser>
            <PalHead><span>目1</span><Close>×</Close></PalHead>
            <BrowserBody>
              <Tree>
                {treeRows.map((r) => <TreeRow key={r.t} $cut={r.cut}>{r.t}</TreeRow>)}
              </Tree>
              <ScrollTrack $w={16}>
                <ScrollArrow $up $gap={9} />
                <Thumb $h={158} $w={14}><Grip /></Thumb>
                <TrackFill />
              </ScrollTrack>
            </BrowserBody>
          </Browser>
        </Dock>
        <Canvas><Scene /></Canvas>
      </Main>
    </Page>
  );
}
